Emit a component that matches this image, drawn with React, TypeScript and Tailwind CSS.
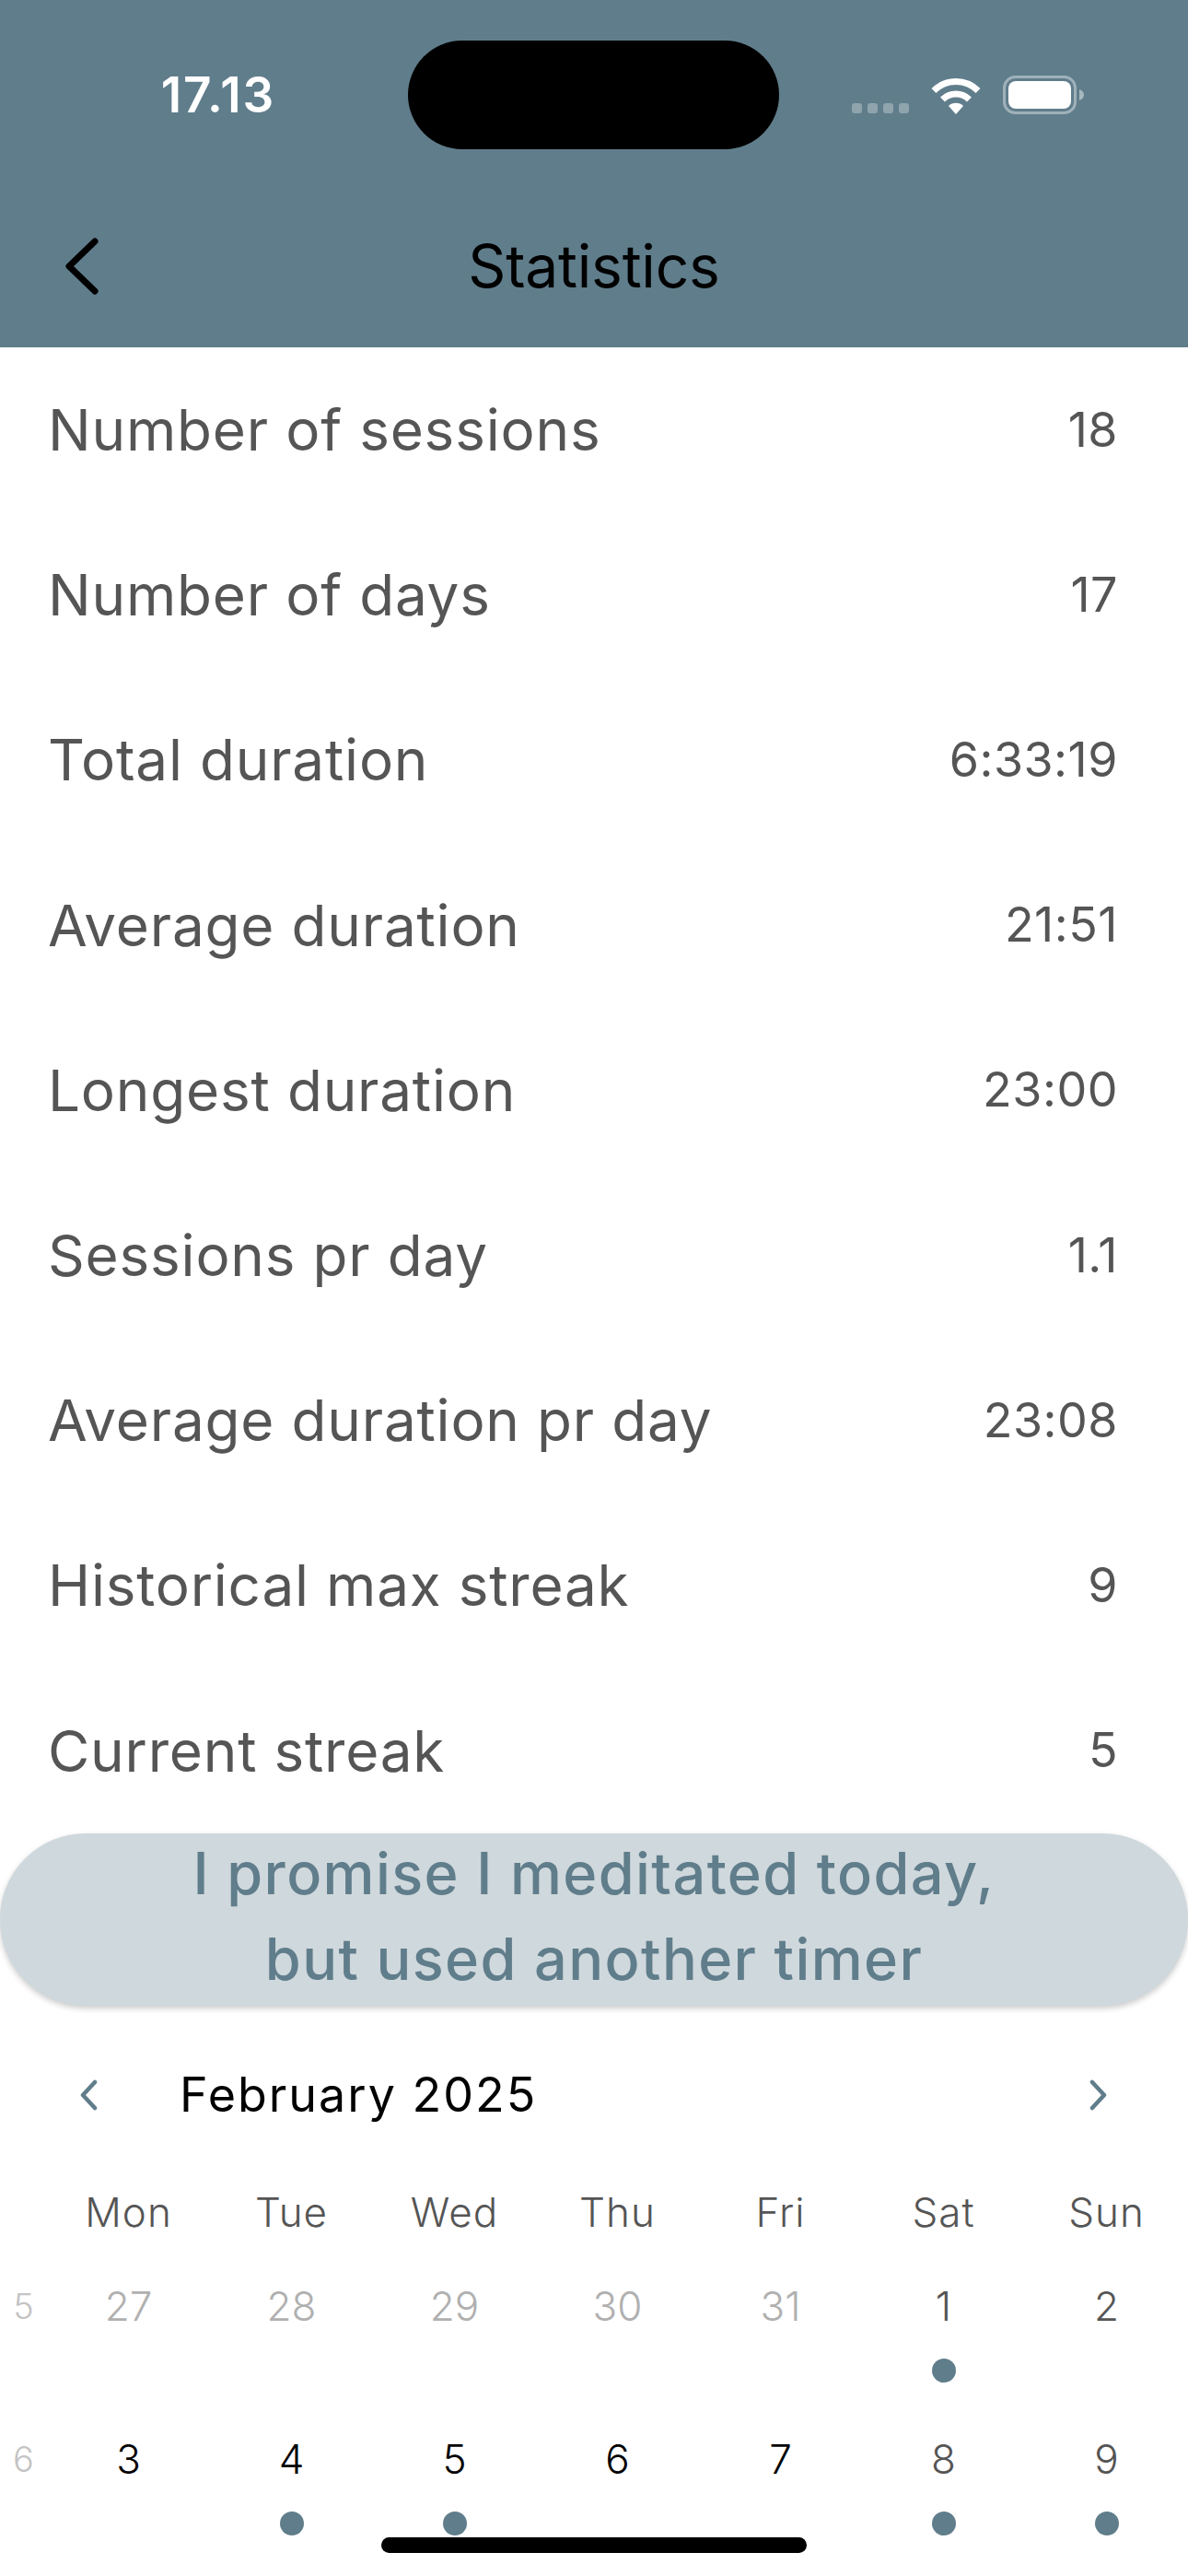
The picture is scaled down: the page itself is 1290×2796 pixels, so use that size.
const STATS = [
  ["Number of sessions", "18"],
  ["Number of days", "17"],
  ["Total duration", "6:33:19"],
  ["Average duration", "21:51"],
  ["Longest duration", "23:00"],
  ["Sessions pr day", "1.1"],
  ["Average duration pr day", "23:08"],
  ["Historical max streak", "9"],
  ["Current streak", "5"],
];

const WEEKDAYS = ["Mon", "Tue", "Wed", "Thu", "Fri", "Sat", "Sun"];

type Day = { n: number; outside?: boolean; dot?: boolean };

const WEEKS: { week: number; days: Day[] }[] = [
  {
    week: 5,
    days: [
      { n: 27, outside: true },
      { n: 28, outside: true },
      { n: 29, outside: true },
      { n: 30, outside: true },
      { n: 31, outside: true },
      { n: 1, dot: true },
      { n: 2 },
    ],
  },
  {
    week: 6,
    days: [
      { n: 3 },
      { n: 4, dot: true },
      { n: 5, dot: true },
      { n: 6 },
      { n: 7 },
      { n: 8, dot: true },
      { n: 9, dot: true },
    ],
  },
];

function StatusIcons() {
  return (
    <div className="flex items-end">
      <div className="flex gap-[6px] mb-[1px]">
        {[0, 1, 2, 3].map((i) => (
          <span key={i} className="h-[11px] w-[11px] rounded-[3px] bg-white/30" />
        ))}
      </div>
      <svg width="54" height="40" viewBox="0 0 54 40" className="ml-[24px]">
        <path d="M3 14.5a34 34 0 0 1 48 0" fill="none" stroke="#fff" strokeWidth="7" />
        <path d="M12.5 24a20.5 20.5 0 0 1 29 0" fill="none" stroke="#fff" strokeWidth="7" />
        <path d="M19 31a11.5 11.5 0 0 1 16 0l-8 9z" fill="#fff" />
      </svg>
      <svg width="88" height="42" viewBox="0 0 88 42" className="ml-[24px]">
        <rect x="1.5" y="1.5" width="77" height="39" rx="12" fill="none" stroke="#fff" strokeOpacity="0.4" strokeWidth="3" />
        <rect x="6" y="6" width="68" height="30" rx="8" fill="#fff" />
        <path d="M83 15c3 1 5 3 5 6s-2 5-5 6z" fill="#fff" fillOpacity="0.45" />
      </svg>
    </div>
  );
}

function Chevron({ dir }: { dir: "left" | "right" }) {
  return (
    <svg width="22" height="34" viewBox="0 0 22 34" fill="none" stroke="#607d8b" strokeWidth="4.5" strokeLinecap="round" strokeLinejoin="round">
      <path d={dir === "left" ? "M17 3L4 17l13 14" : "M4 3l13 14L4 31"} />
    </svg>
  );
}

export default function App() {
  return (
    <div className="relative h-[2796px] w-[1290px] overflow-hidden bg-white font-['Inter',sans-serif]">
      {/* Kopf */}
      <header className="h-[377px] bg-[#607d8b] pt-[44px]">
        <div className="flex h-[118px] items-center">
          <span className="w-[443px] pl-[31px] pt-[2px] text-center text-[53px] font-semibold tracking-[2px] text-white">
            17.13
          </span>
          <div className="h-full w-[403px] rounded-full bg-black" />
          <div className="ml-[79px]">
            <StatusIcons />
          </div>
        </div>
        <div className="relative mt-[78px] flex h-[98px] items-center justify-center">
          <svg width="38" height="62" viewBox="0 0 38 62" fill="none" stroke="#000" strokeWidth="7" strokeLinecap="round" strokeLinejoin="round" className="absolute left-[70px] top-[18px]">
            <path d="M33 4L5 31l28 27" />
          </svg>
          <h1 className="text-[64px] font-normal tracking-[-0.2px] text-black">Statistics</h1>
        </div>
      </header>

      {/* Statistik */}
      <div>
        {STATS.map(([label, value]) => (
          <div key={label} className="flex h-[179.2px] items-center justify-between pl-[52px] pr-[76px] text-[#555555]">
            <span className="text-[62px] font-normal tracking-[0.8px]">{label}</span>
            <span className="text-[52px] font-normal tracking-[0.5px]">{value}</span>
          </div>
        ))}
      </div>

      <button className="flex h-[187px] w-full flex-col items-center justify-center rounded-[93px] bg-[#cfd8dc] pb-[6px] text-[63px] font-[450] leading-[93px] tracking-[1.4px] text-[#607d8b] shadow-[0_3px_6px_rgba(0,0,0,0.2)]">
        <span>I promise I meditated today,</span>
        <span>but used another timer</span>
      </button>

      {/* Kalender */}
      <div className="mt-[59px] flex h-[76px] items-center px-[86px]">
        <Chevron dir="left" />
        <span className="ml-[87px] text-[52px] font-normal tracking-[2px] text-black">February 2025</span>
        <div className="ml-auto">
          <Chevron dir="right" />
        </div>
      </div>

      <div className="mt-[63px] grid grid-cols-[51px_repeat(7,177px)] text-center text-[44px] font-[350] tracking-[1px]">
        <div />
        {WEEKDAYS.map((d) => (
          <div key={d} className="h-[52px] leading-[52px] text-[#555555]">
            {d}
          </div>
        ))}
      </div>

      <div className="mt-[50px] flex flex-col">
        {WEEKS.map((w) => (
          <div key={w.week} className="grid h-[166px] grid-cols-[51px_repeat(7,177px)] text-center text-[44px] font-[350]">
            <div className="h-[52px] text-[38px] leading-[52px] text-[#c4c4c4]">{w.week}</div>
            {w.days.map((d, i) => (
              <div key={d.n} className="flex flex-col items-center">
                <span
                  className={
                    d.outside
                      ? "h-[52px] leading-[52px] text-[#b0b0b0]"
                      : i >= 5
                        ? "h-[52px] leading-[52px] text-[#555555]"
                        : "h-[52px] leading-[52px] text-black"
                  }
                >
                  {d.n}
                </span>
                {d.dot && <span className="mt-[31px] h-[26px] w-[26px] rounded-full bg-[#607d8b]" />}
              </div>
            ))}
          </div>
        ))}
      </div>

      {/* Home-Indikator */}
      <div className="absolute bottom-[25px] left-[414px] h-[17px] w-[462px] rounded-full bg-black" />
    </div>
  );
}
